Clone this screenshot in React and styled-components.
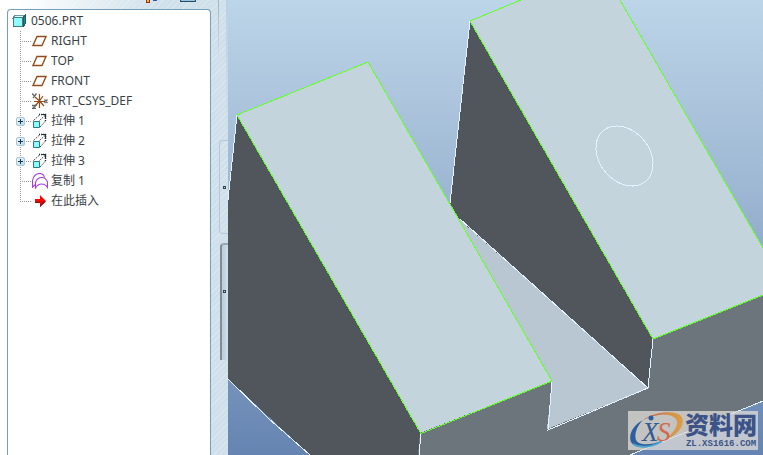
import { useState } from "react";
import styled, { createGlobalStyle } from "styled-components";

const GlobalStyle = createGlobalStyle`
  * {
    box-sizing: border-box;
  }
  body {
    margin: 0;
    overflow: hidden;
    font-family: "Noto Sans", "Noto Sans CJK SC", sans-serif;
    font-size: 12px;
    color: #3a3f46;
  }
`;

const Page = styled.div`
  display: flex;
  height: 100vh;
`;

const Sidebar = styled.aside`
  flex: 0 0 211px;
  display: flex;
  flex-direction: column;
  padding-left: 7px;
  background:
    linear-gradient(90deg, #ffffff 10%, rgba(255, 255, 255, 0) 75%),
    repeating-linear-gradient(135deg, #cfe0ea 0 3px, #d9e7ef 3px 4px);
`;

const Toolbar = styled.div`
  height: 9px;
  display: flex;
  justify-content: flex-end;
  gap: 18px;
  padding-right: 14px;
`;

const ToolButton = styled.button`
  width: 17px;
  height: 8px;
  padding: 0;
  border: none;
  background: none;

  svg {
    display: block;
  }
`;

const TreePanel = styled.nav`
  flex: 1;
  padding: 1px 4px;
  background: #ffffff;
  border: 1px solid #729fba;
  border-bottom: none;
  border-radius: 4px 4px 0 0;
`;

const Row = styled.div`
  display: flex;
  align-items: center;
  height: 20px;
  gap: ${(props) => (props.$root ? "5px" : "3px")};
  line-height: 20px;
  white-space: nowrap;

  svg {
    flex: none;
  }
`;

const Branches = styled.ul`
  list-style: none;
  margin: 0;
  padding: 0 0 0 4px;
`;

const Branch = styled.li`
  padding-left: 4px;
  background:
    repeating-linear-gradient(#9a9a9a 0 1px, transparent 1px 2px) 4px 0 / 1px
      ${(props) => (props.$last ? "10px" : "100%")} no-repeat,
    repeating-linear-gradient(90deg, #9a9a9a 0 1px, transparent 1px 2px) 4px 10px /
      12px 1px no-repeat;
`;

const Handle = styled.span`
  width: 9px;
  height: 9px;
  flex: none;
  margin-left: -4px;
  margin-right: 4px;
`;

const Expander = styled.button`
  width: 9px;
  height: 9px;
  flex: none;
  margin: 1px 4px 0 -4px;
  padding: 0;
  border: 1px solid #a9c6d9;
  border-radius: 2px;
  background: linear-gradient(135deg, #eef7fc, #bcd9ec);
  cursor: pointer;

  svg {
    display: block;
  }
`;

const Splitter = styled.div`
  flex: 0 0 17px;
  display: flex;
  flex-direction: column;
  align-items: flex-end;
  gap: 9px;
  padding-top: 140px;
  background:
    linear-gradient(#a9b5bc, #cfdfe8) 7px 0 / 1px 58px no-repeat,
    linear-gradient(#b9d0e6, rgba(185, 208, 230, 0)) 100% 0 / 2px 140px no-repeat,
    repeating-linear-gradient(135deg, #cfe0ea 0 3px, #d9e7ef 3px 4px);
`;

const SplitTab = styled.button`
  width: 9px;
  height: 94px;
  padding: 0 0 0 3px;
  border: 1px solid #afcadc;
  border-right: none;
  border-radius: 4px 0 0 4px;
  background: transparent;
  cursor: pointer;

  ${(props) =>
    props.$open &&
    `
    width: 8px;
    height: 117px;
    padding: 0 0 22px 1px;
    border: none;
    border-top: 2px solid #97aab4;
    border-left: 2px solid #7d8f99;
    border-radius: 4px 0 0 0;
    background: linear-gradient(90deg, #b9ced9, #cfe0ea);
  `}

  svg {
    display: block;
  }
`;

const Viewport = styled.main`
  flex: 1;
  min-width: 0;
  position: relative;
  overflow: hidden;
  background: linear-gradient(#bdd5e8, #9bb4d1 45%, #6584b1);
`;

const Scene = styled.svg`
  display: block;
  width: 100%;
  height: 100%;
`;

const Watermark = styled.div`
  position: absolute;
  right: 5px;
  bottom: 5px;
  display: flex;
  align-items: center;
  height: 39px;
  padding: 0 1px;
  background: rgba(222, 220, 216, 0.76);
  color: #3d5387;
`;

const Brand = styled.div`
  display: flex;
  flex-direction: column;
  align-items: center;
`;

const BrandName = styled.strong`
  font: 900 24px/27px "Liberation Sans", "Noto Sans CJK SC", sans-serif;
`;

const BrandUrl = styled.span`
  font: bold 9px/10px "Liberation Mono", monospace;
`;

const PartIcon = () => (
  <svg width="14" height="14" viewBox="0 0 14 14" shapeRendering="crispEdges">
    <path d="M1 4L3 1H13L11 4Z" fill="#d8ffff" stroke="#6c9a9c" />
    <path d="M11 4L13 1V10L11 13Z" fill="#138b93" stroke="#245d62" />
    <path d="M1.5 3.5H10.5V12.5H1.5Z" fill="#8ffcff" stroke="#48797c" />
  </svg>
);

const PlaneIcon = () => (
  <svg width="16" height="16" viewBox="0 0 16 16">
    <path d="M5 3.5H14L10 12.5H1Z" fill="none" stroke="#934d1c" strokeWidth="1.4" />
  </svg>
);

const CsysIcon = () => (
  <svg width="16" height="16" viewBox="0 0 16 16" fill="none">
    <path d="M7.5 1V15M7.5 8L3 13M7.5 8L3 4M7.5 8L11 3M7.5 8L12 13M2 8.5H13" stroke="#934d1c" strokeWidth="1.2" />
    <path d="M0 0.5L2.5 3M4.5 0.5L1 5M12.5 6.5L15.5 10M15.5 6.5L12.5 10M0 12.5H4L0.5 15.5H4" stroke="#666666" strokeWidth="1.3" />
  </svg>
);

const ExtrudeIcon = () => (
  <svg width="16" height="16" viewBox="0 0 16 16" fill="none">
    <path d="M1.5 7.5L8 1.5M7.5 7.5L13 2.5M8 14L13.5 8" stroke="#555555" strokeDasharray="2 1" />
    <path d="M7 1.5H13.5V8" stroke="#1f3338" strokeWidth="1.4" strokeDasharray="1 1" />
    <path d="M9 1.5H13.5V6" stroke="#1f3338" strokeWidth="1.2" />
    <path d="M1.5 8.5H7.5V14.5H1.5Z" fill="#8dfbff" stroke="#267b83" />
  </svg>
);

const CopyIcon = () => (
  <svg width="16" height="16" viewBox="0 0 16 16" fill="none" stroke="#a93be0" strokeWidth="1.1">
    <path d="M3.5 11.5L0.5 14V7.5C1.5 3 4 0.5 7.5 0.5C10.5 0.5 12 2 12.5 4.5" />
    <path d="M3.5 15V9.5C4.5 6.5 7 4.5 10 4.5C13 4.5 14.5 6.5 15.5 9V14.5C14 12 12 11 9.5 11C6.5 11 5 12.5 3.5 15Z" />
  </svg>
);

const InsertIcon = () => (
  <svg width="16" height="16" viewBox="0 0 16 16">
    <path d="M3 6H8V2L14 8L8 14V10H3Z" fill="#f80808" />
    <path d="M3 8.5H14L8 14V10H3Z" fill="#8f1212" />
    <path d="M3 8H13L8 12V9H3Z" fill="#e00808" />
  </svg>
);

const TabDot = () => (
  <svg width="3" height="3" viewBox="0 0 3 3" shapeRendering="crispEdges">
    <path d="M0 0H3V3H0Z" fill="#34444c" />
    <path d="M1 1H2V2H1Z" fill="#c7d4dc" />
  </svg>
);

const Logo = () => (
  <svg width="56" height="39" viewBox="0 0 56 39" fill="none">
    <defs>
      <linearGradient id="ring" x1="0" y1="0" x2="1" y2="0">
        <stop offset="0" stopColor="#c9503c" />
        <stop offset="0.7" stopColor="#d3934a" />
        <stop offset="1" stopColor="#dd9d45" />
      </linearGradient>
    </defs>
    <path d="M14 9C4 14-1 24 2 31C7 39 23 36 33 30C22 34 10 35 7 29C5 23 8 15 14 9Z" fill="#2d5f9f" />
    <path d="M4 33C12 38 24 36 33 30" stroke="#4aa3cf" strokeWidth="2" />
    <path d="M14 9C25 1 44-1 51 4C59 12 49 25 35 29C44 23 52 13 46 7C39 1 26 3 14 9Z" fill="url(#ring)" />
    <circle cx="22" cy="7" r="2.5" fill="#2d5f9f" />
    <text x="13" y="30" fill="#345a94" fontFamily="Liberation Serif, serif" fontStyle="italic" fontSize="27">X</text>
    <text x="28" y="30" fill="#d2694b" fontFamily="Liberation Serif, serif" fontStyle="italic" fontSize="27">S</text>
  </svg>
);

const features = [
  { name: "RIGHT", icon: PlaneIcon },
  { name: "TOP", icon: PlaneIcon },
  { name: "FRONT", icon: PlaneIcon },
  { name: "PRT_CSYS_DEF", icon: CsysIcon },
  { name: "拉伸 1", icon: ExtrudeIcon, group: true },
  { name: "拉伸 2", icon: ExtrudeIcon, group: true },
  { name: "拉伸 3", icon: ExtrudeIcon, group: true },
  { name: "复制 1", icon: CopyIcon },
  { name: "在此插入", icon: InsertIcon },
];

const Feature = ({ feature, last }) => {
  const [open, setOpen] = useState(false);
  const Icon = feature.icon;

  return (
    <Branch $last={last}>
      <Row>
        {feature.group ? (
          <Expander aria-label={feature.name} aria-expanded={open} onClick={() => setOpen(!open)}>
            <svg width="7" height="7" viewBox="0 0 7 7" shapeRendering="crispEdges">
              <path d={open ? "M1 3H6V4H1Z" : "M1 3H6V4H1ZM3 1H4V6H3Z"} fill="#17384c" />
            </svg>
          </Expander>
        ) : (
          <Handle />
        )}
        <Icon />
        <span>{feature.name}</span>
      </Row>
    </Branch>
  );
};

const Model = () => (
  <Scene viewBox="228 0 535 455" preserveAspectRatio="xMinYMin slice" role="img" aria-label="0506.PRT">
    <g shapeRendering="crispEdges">
      <path d="M237 115L228 200V379L310 455H419L421 433Z" fill="#51555c" />
      <path d="M420 433L552 381L648 388L653 339L763 295V401L630 455H418Z" fill="#6d757c" />
      <path d="M458 217L648 388L547 429L552 381Z" fill="#b9c7d3" />
      <path d="M470 21L450 203L459 219L648 388L653 339Z" fill="#51555c" />
      <path d="M237 115L368 62L552 381L420 433Z" fill="#c3d4dd" />
      <path d="M470 21L521 0H620L763 248V295L653 339Z" fill="#c3d4dd" />
    </g>
    <g fill="none" stroke="#e3f3ff" shapeRendering="crispEdges">
      <path d="M237 115L228 200M228 379L268 418L310 455M421 433L419 455" />
      <path d="M470 21L450 203M460 219L648 388L548 430L552 381M648 388L653 339" />
      <path d="M763 401L630 455" />
      <ellipse cx="624.5" cy="156" rx="33" ry="25" transform="rotate(50 624.5 156)" />
    </g>
    <g fill="none" stroke="#64ff2b" shapeRendering="crispEdges">
      <path d="M237 115L368 62L552 381L421 433.5Z" />
      <path d="M521 0L470 21L653 339L763 295M620 0L763 248" />
    </g>
  </Scene>
);

const App = () => {
  return (
    <Page>
      <GlobalStyle />
      <Sidebar>
        <Toolbar>
          <ToolButton aria-label="Settings">
            <svg width="17" height="8" viewBox="0 0 17 8" shapeRendering="crispEdges">
              <path d="M1 0H5V3H1Z" fill="#9b2b18" />
              <path d="M2 0H4V2H2Z" fill="#f0b92e" />
              <path d="M8 0H12V1H8Z" fill="#2d50c0" />
            </svg>
          </ToolButton>
          <ToolButton aria-label="Display">
            <svg width="17" height="8" viewBox="0 0 17 8" shapeRendering="crispEdges">
              <path d="M0 0H16V2H0Z" fill="#33495c" />
              <path d="M1 0H15V1H1Z" fill="#8cc4e6" />
            </svg>
          </ToolButton>
        </Toolbar>
        <TreePanel>
          <Row $root>
            <PartIcon />
            <span>0506.PRT</span>
          </Row>
          <Branches>
            {features.map((feature, i) => (
              <Feature key={feature.name} feature={feature} last={i === features.length - 1} />
            ))}
          </Branches>
        </TreePanel>
      </Sidebar>
      <Splitter>
        <SplitTab aria-label="Toggle tree">
          <TabDot />
        </SplitTab>
        <SplitTab $open aria-label="Toggle panel">
          <TabDot />
        </SplitTab>
      </Splitter>
      <Viewport>
        <Model />
        <Watermark>
          <Logo />
          <Brand>
            <BrandName>资料网</BrandName>
            <BrandUrl>ZL.XS1616.COM</BrandUrl>
          </Brand>
        </Watermark>
      </Viewport>
    </Page>
  );
};

export default App;
